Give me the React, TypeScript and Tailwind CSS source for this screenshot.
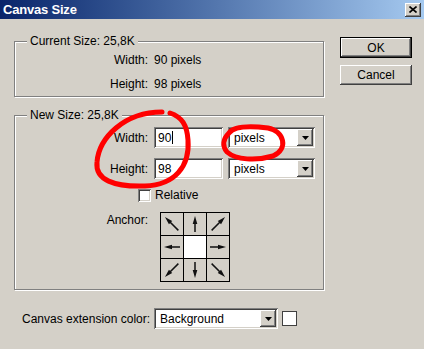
const raised =
  'bg-[#d4d0c8] shadow-[inset_-1px_-1px_0_#404040,inset_1px_1px_0_#ffffff,inset_-2px_-2px_0_#808080,inset_2px_2px_0_#d4d0c8]';
const sunken =
  'bg-white shadow-[inset_1px_1px_0_#808080,inset_-1px_-1px_0_#ffffff,inset_2px_2px_0_#404040,inset_-2px_-2px_0_#d4d0c8]';
const etched =
  'm-0 p-0 border border-[#808080] shadow-[inset_1px_1px_0_#ffffff,1px_1px_0_#ffffff]';

function Arrow({ angle }: { angle: number }) {
  const diag = angle % 90 !== 0;
  const top = diag ? 1 : 3;
  const bottom = diag ? 20 : 19;
  return (
    <svg width="22" height="22" viewBox="0 0 22 22">
      <g transform={`rotate(${angle} 11 11)`}>
        <line x1="11" y1={bottom} x2="11" y2={top + 5} stroke="#111" strokeWidth="1.5" />
        <polygon points={`11,${top} 8.7,${top + 8} 13.3,${top + 8}`} fill="#111" />
      </g>
    </svg>
  );
}

function Dropdown({ value, width }: { value: string; width: string }) {
  return (
    <div className={`${sunken} ${width} h-[21px] flex items-center justify-between pl-[6px] pr-[2px]`}>
      <span>{value}</span>
      <div className={`${raised} w-[16px] h-[17px] flex items-center justify-center`}>
        <svg width="7" height="4" viewBox="0 0 7 4">
          <polygon points="0,0 7,0 3.5,4" fill="#000" />
        </svg>
      </div>
    </div>
  );
}

export default function App() {
  const anchors = [315, 0, 45, 270, null, 90, 225, 180, 135];
  return (
    <div className="relative w-[424px] h-[349px] overflow-hidden bg-[#d4d0c8] text-black text-[12px] leading-[14px] font-['Liberation_Sans',Arial,sans-serif]">
      {/* title bar */}
      <div className="h-[19px] flex items-center justify-between pl-[3px] pr-[3px] bg-gradient-to-r from-[#0a246a] to-[#a6caf0]">
        <span className="text-white font-bold text-[13px] tracking-[-0.2px]">Canvas Size</span>
        <div className={`${raised} w-[16px] h-[14px] flex items-center justify-center`}>
          <svg width="8" height="7" viewBox="0 0 8 7">
            <path d="M0.5 0.5 L7.5 6.5 M7.5 0.5 L0.5 6.5" stroke="#000" strokeWidth="1.6" />
          </svg>
        </div>
      </div>

      <div className="flex pl-[14px] pt-[15px]">
        <div className="w-[310px]">
          <fieldset className={etched}>
            <legend className="ml-[12px] px-[3px] bg-[#d4d0c8] leading-[14px]">Current Size: 25,8K</legend>
            <div className="grid grid-cols-[133px_auto] gap-x-[6px] auto-rows-[24px] items-center">
              <span className="text-right">Width:</span>
              <span>90 pixels</span>
              <span className="text-right">Height:</span>
              <span>98 pixels</span>
            </div>
          </fieldset>

          <fieldset className={`${etched} mt-[11px]`}>
            <legend className="ml-[12px] px-[3px] bg-[#d4d0c8] leading-[14px]">New Size: 25,8K</legend>
            <div className="pt-[5px] pb-[7px]">
              <div className="flex items-center">
                <span className="w-[133px] text-right">Width:</span>
                <div className={`${sunken} ml-[6px] w-[69px] h-[21px] flex items-center pl-[4px]`}>
                  <span>90</span>
                  <span className="ml-px w-px h-[13px] bg-black" />
                </div>
                <div className="ml-[5px]">
                  <Dropdown value="pixels" width="w-[87px]" />
                </div>
              </div>
              <div className="flex items-center mt-[10px]">
                <span className="w-[133px] text-right">Height:</span>
                <div className={`${sunken} ml-[6px] w-[69px] h-[21px] flex items-center pl-[4px]`}>
                  <span>98</span>
                </div>
                <div className="ml-[5px]">
                  <Dropdown value="pixels" width="w-[87px]" />
                </div>
              </div>
              <div className="flex items-center mt-[9px] ml-[123px]">
                <div className={`${sunken} w-[13px] h-[13px]`} />
                <span className="ml-[4px]">Relative</span>
              </div>
              <div className="flex items-start mt-[10px]">
                <span className="w-[133px] text-right pt-[1px]">Anchor:</span>
                <div className="ml-[12px] w-[70px] h-[70px] p-px gap-px bg-black grid grid-cols-3">
                  {anchors.map((a, i) => (
                    <div
                      key={i}
                      className={`w-[22px] h-[22px] ${a === null ? 'bg-white' : 'bg-[#d4d0c8]'}`}
                    >
                      {a !== null && <Arrow angle={a} />}
                    </div>
                  ))}
                </div>
              </div>
            </div>
          </fieldset>

          <div className="flex items-center mt-[18px] pl-[8px]">
            <span className="w-[132px]">Canvas extension color:</span>
            <Dropdown value="Background" width="w-[124px]" />
            <div className="ml-[4px] w-[15px] h-[15px] bg-white border border-[#404040]" />
          </div>
        </div>

        <div className="ml-[16px] pt-[3px] flex flex-col gap-[7px]">
          <button className={`${raised} w-[72px] h-[21px] border border-black flex items-center justify-center`}>
            OK
          </button>
          <button className={`${raised} w-[72px] h-[20px] flex items-center justify-center`}>
            Cancel
          </button>
        </div>
      </div>

      {/* red marker annotations */}
      <svg className="absolute inset-0 pointer-events-none" width="424" height="349" viewBox="0 0 424 349">
        <path
          d="M162 112 C124 112 99 138 97 162 C95 180 114 187 145 186 C175 185 190 166 188 140 C187 125 182 117 170 113"
          fill="none"
          stroke="#ff0000"
          strokeWidth="5"
          strokeLinecap="round"
        />
        <path
          d="M229 133 C234 126 252 126 268 128 C284 131 289 149 273 156 C256 161 236 160 227 152 C222 146 223 139 229 133"
          fill="none"
          stroke="#ff0000"
          strokeWidth="5"
          strokeLinecap="round"
        />
      </svg>
    </div>
  );
}
